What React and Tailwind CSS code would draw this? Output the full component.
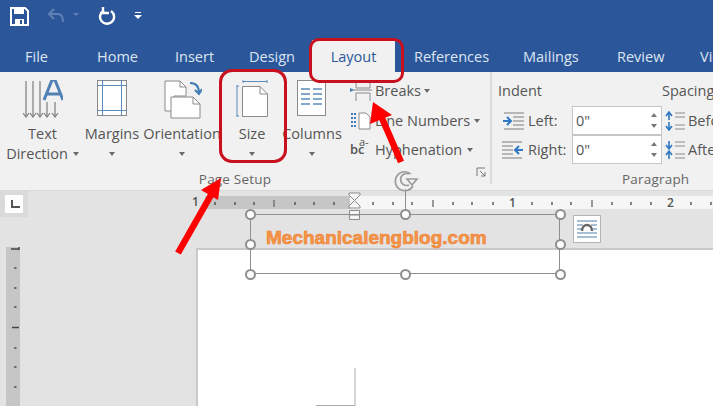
const tabs = [
  { label: "File", cls: "ml-[25px] w-[72px]" },
  { label: "Home", cls: "w-[78px]" },
  { label: "Insert", cls: "w-[74px]" },
  { label: "Design", cls: "w-[63px]" },
];
const tabsRight = [
  { label: "References", cls: "w-[109px]" },
  { label: "Mailings", cls: "w-[94px]" },
  { label: "Review", cls: "w-[83px]" },
  { label: "View", cls: "w-[40px]" },
];

const rulerTicks = [215, 235, 254, 295, 314, 334, 373, 393, 412, 453, 472, 493, 532, 552, 571, 612, 631, 651, 691, 711];
const rulerLong = [274, 433, 592];
const vTicks = [268, 288, 307, 348, 367, 387];
const handles = [
  [250, 214], [405, 214], [560, 214],
  [250, 244], [560, 244],
  [250, 274], [405, 274], [560, 274],
];

function Caret({ className = "" }) {
  return <span className={`inline-block h-0 w-0 border-x-[3.5px] border-t-[4px] border-x-transparent border-t-[#6a6a6a] ${className}`} />;
}

function BigButton({ width, icon, lines, caretInline }) {
  return (
    <div className={`flex shrink-0 flex-col items-center ${width}`}>
      <div className="flex h-[52px] items-start justify-center pt-[8px]">{icon}</div>
      <div className="h-[20px] whitespace-nowrap leading-[20px]">{lines[0]}</div>
      <div className="flex h-[20px] items-center justify-center whitespace-nowrap leading-[20px]">
        {lines[1]}
        {caretInline ? <Caret className="ml-[5px]" /> : <Caret />}
      </div>
    </div>
  );
}

function TextDirIcon() {
  return (
    <svg width="40" height="40" viewBox="-1 0 40 40" fill="none">
      <g stroke="#7d7d7d" strokeWidth="1.2">
        <path d="M2 1V37M9 1V37M16 1V37M23 22V37M31 22V37" />
        <path d="M-1 33L2 37L5 33M6 33L9 37L12 33M13 33L16 37L19 33M20 33L23 37L26 33M28 33L31 37L34 33" />
      </g>
      <path d="M20 20L28 0H31L39 20M23 14H36" stroke="#4f81b5" strokeWidth="3" />
    </svg>
  );
}
function MarginsIcon() {
  return (
    <svg width="30" height="37" viewBox="0 0 30 37" fill="none">
      <rect x="0.5" y="0.5" width="29" height="35" fill="#fff" stroke="#8a8a8a" />
      <path d="M0 5.5H30M0 30.5H30M5.5 0V36M24.5 0V36" stroke="#5b8bbb" />
    </svg>
  );
}
function OrientationIcon() {
  return (
    <svg width="38" height="39" viewBox="0 0 38 39" fill="none" stroke="#8a8a8a" className="ml-[2px]">
      <path d="M1 1H16L22 7V16H10V31H1Z" fill="#fff" />
      <path d="M16 1V7H22" />
      <path d="M7 17H29L36 24V38H7Z" fill="#fff" />
      <path d="M29 17V24H36" />
      <path d="M26 3C32 3 35 6 35 13M31 10L35 14L38 9" stroke="#3f7cb5" strokeWidth="2" />
    </svg>
  );
}
function SizeIcon() {
  return (
    <svg width="32" height="38" viewBox="0 0 32 38" fill="none">
      <path d="M7 1.5H31M7 0V3M31 0V3M1 6V36M0 6H3M0 36H3" stroke="#5b8bbb" />
      <path d="M6.5 6.5H24L31.5 14V36.5H6.5Z" fill="#fff" stroke="#8a8a8a" />
      <path d="M24 6.5V14H31.5" stroke="#8a8a8a" />
    </svg>
  );
}
function ColumnsIcon() {
  return (
    <svg width="30" height="37" viewBox="0 0 30 37" fill="none">
      <rect x="0.5" y="0.5" width="28" height="35" fill="#fff" stroke="#8a8a8a" />
      <path d="M4 9H13M16 9H25M4 14H13M16 14H25M4 19H13M16 19H25M4 24H13M16 24H25" stroke="#5b8bbb" strokeWidth="1.4" />
    </svg>
  );
}
function IndentIcon({ flip }) {
  return (
    <svg width="22" height="18" viewBox="0 0 22 18" fill="none" className={flip ? "-scale-x-100" : ""}>
      <path d="M2 1H22M11 5H22M11 9H22M11 13H22M2 17H22" stroke="#7d7d7d" />
      <path d="M1 9H8M5 5L9 9L5 13" stroke="#2f78c4" strokeWidth="2" />
    </svg>
  );
}
function SpacingIcon({ flip }) {
  return (
    <svg width="20" height="20" viewBox="0 0 20 20" fill="none">
      <path d="M10 2H20M10 6H20M10 14H20M10 18H20" stroke="#8a8a8a" />
      <path d={flip ? "M4 1V8M1 5L4 9L7 5M4 19V12M1 15L4 11L7 15" : "M4 9V2M1 5L4 1L7 5M4 11V18M1 15L4 19L7 15"} stroke="#2f78c4" strokeWidth="1.6" />
    </svg>
  );
}
function Spinner() {
  return (
    <div className="flex flex-col items-center gap-[7px] pr-[4px]">
      <span className="h-0 w-0 border-x-[3px] border-b-[4px] border-x-transparent border-b-[#777]" />
      <span className="h-0 w-0 border-x-[3px] border-t-[4px] border-x-transparent border-t-[#777]" />
    </div>
  );
}
function ValueInput() {
  return (
    <div className="flex h-[29px] w-[90px] shrink-0 items-center justify-between border border-[#c6c6c6] bg-white pl-[3px]">
      <span>0"</span>
      <Spinner />
    </div>
  );
}

export default function App() {
  return (
    <div className="relative h-[406px] w-[713px] overflow-hidden bg-[#e3e3e3] font-['Open_Sans',sans-serif] text-[14.5px] text-[#555]">
      {/* title bar + tabs */}
      <header className="flex h-[72px] flex-col bg-[#2b579a] text-[#dde5f1]">
        <div className="flex h-[40px] items-start pl-[10px] pt-[7px]">
          <svg width="19" height="19" viewBox="0 0 19 19" fill="none">
            <path d="M1 1H15L18 4V18H1Z" stroke="#fff" strokeWidth="2" fill="none" />
            <path d="M4 1H14V7H4ZM5 12H14V18H5Z" fill="#fff" />
            <path d="M10 13H12V17H10Z" fill="#2b579a" />
          </svg>
          <svg width="18" height="16" viewBox="0 0 18 16" fill="none" className="ml-[18px] mt-[1px]" stroke="#5f80b4" strokeWidth="2">
            <path d="M7 1L2 6L7 11M2 6H11C15 6 16 9 16 14" />
          </svg>
          <span className="ml-[8px] mt-[6px] h-0 w-0 border-x-[3px] border-t-[3px] border-x-transparent border-t-[#5f80b4]" />
          <svg width="18" height="18" viewBox="0 0 18 18" fill="none" className="ml-[19px]" stroke="#fff" strokeWidth="2.4">
            <path d="M6 3.5A7 7 0 1 0 13 4M5 0V6H11" />
          </svg>
          <div className="ml-[18px] mt-[5px] flex flex-col items-center gap-[2px]">
            <span className="h-[1px] w-[6px] bg-white" />
            <span className="h-0 w-0 border-x-[4px] border-t-[4px] border-x-transparent border-t-white" />
          </div>
        </div>
        <nav className="flex h-[32px] items-start">
          {tabs.map((t) => (
            <div key={t.label} className={`${t.cls} shrink-0 whitespace-nowrap pt-[7px] leading-[20px]`}>{t.label}</div>
          ))}
          <div className="mr-[19px] flex h-[32px] w-[83px] shrink-0 justify-center bg-[#f1f1f1] pt-[7px] leading-[20px] text-[#2b579a]">Layout</div>
          {tabsRight.map((t) => (
            <div key={t.label} className={`${t.cls} shrink-0 whitespace-nowrap pt-[7px] leading-[20px]`}>{t.label}</div>
          ))}
        </nav>
      </header>

      {/* ribbon */}
      <section className="flex h-[118px] bg-[#f1f1f1]">
        <div className="mb-[6px] flex w-[492px] shrink-0 flex-col border-r-2 border-[#dcdcdc]">
          <div className="flex h-[92px]">
            <BigButton width="w-[82px] pl-[3px]" icon={<TextDirIcon />} lines={["Text", "Direction"]} caretInline />
            <BigButton width="w-[60px]" icon={<MarginsIcon />} lines={["Margins", ""]} />
            <BigButton width="w-[80px]" icon={<OrientationIcon />} lines={["Orientation", ""]} />
            <BigButton width="w-[60px]" icon={<SizeIcon />} lines={["Size", ""]} />
            <BigButton width="w-[60px]" icon={<ColumnsIcon />} lines={["Columns", ""]} />
            <div className="ml-[8px] flex shrink-0 flex-col whitespace-nowrap pt-[5px]">
              <div className="flex h-[29px] items-center gap-[3px]">
                <svg width="22" height="24" viewBox="0 0 22 24" fill="none" stroke="#8a8a8a">
                  <path d="M6 2V9H20V2M6 14H20V22M6 14V22M2 11H22" />
                  <path d="M0 9L4 11L0 13Z" fill="#3f7cb5" stroke="none" />
                </svg>
                <span>Breaks</span>
                <Caret />
              </div>
              <div className="flex h-[30px] items-center gap-[4px]">
                <svg width="21" height="18" viewBox="0 0 21 18" fill="none">
                  <path d="M9 1H16L20 5V17H9Z" fill="#fff" stroke="#8a8a8a" />
                  <path d="M1 2H6M1 6H6M1 10H6M1 14H6" stroke="#3f7cb5" strokeWidth="2" strokeDasharray="2 1" />
                </svg>
                <span>Line Numbers</span>
                <Caret />
              </div>
              <div className="flex h-[29px] items-center gap-[5px]">
                <span className="relative w-[20px] text-[13px] font-semibold leading-none">bc<span className="absolute left-[9px] top-[-7px] text-[11px] font-normal">a-</span></span>
                <span>Hyphenation</span>
                <Caret />
              </div>
            </div>
          </div>
          <div className="relative flex h-[20px] items-center justify-center pr-[20px] pt-[10px]">
            <span className="text-[13.5px] tracking-[0.2px] text-[#666]">Page Setup</span>
            <svg width="10" height="10" viewBox="0 0 10 10" fill="none" className="absolute right-[4px] top-[3px]" stroke="#777">
              <path d="M1 9V1H9M4 4L9 9M9 5V9H5" />
            </svg>
          </div>
        </div>

        <div className="flex shrink-0 flex-col whitespace-nowrap pl-[6px] pt-[8px]">
          <div className="flex h-[26px] gap-[120px]">
            <span>Indent</span>
            <span>Spacing</span>
          </div>
          <div className="flex h-[29px] items-center">
            <span className="ml-[4px] mr-[4px]"><IndentIcon /></span>
            <span className="w-[44px]">Left:</span>
            <ValueInput />
            <span className="ml-[3px] mr-[3px]"><SpacingIcon /></span>
            <span>Before</span>
          </div>
          <div className="flex h-[29px] items-center">
            <span className="ml-[4px] mr-[4px]"><IndentIcon flip /></span>
            <span className="w-[44px]">Right:</span>
            <ValueInput />
            <span className="ml-[3px] mr-[3px]"><SpacingIcon flip /></span>
            <span>After</span>
          </div>
          <div className="mt-[5px] pl-[124px] text-[13.5px] tracking-[0.2px] text-[#666]">Paragraph</div>
        </div>
      </section>

      {/* document area */}
      <main className="flex h-[216px] flex-col">
        <div className="h-[6px] border-t border-[#d8d8d8]" />
        <div className="relative ml-[205px] flex h-[13px]">
          <div className="w-[145px] bg-[#c6c6c6]" />
          <div className="flex-1 bg-[#f6f6f6]" />
        </div>
        <div className="ml-[196px] mt-[39px] flex-1 border-l-2 border-t-2 border-[#c9c9c9] bg-white" />
      </main>

      {/* ruler corner */}
      <div className="absolute left-0 top-[190px] flex h-[27px] w-[28px] items-center justify-center bg-[#dadada]">
        <div className="flex h-[18px] w-[18px] items-center justify-center bg-white">
          <span className="h-[8px] w-[9px] translate-x-[1px] border-b-2 border-l-2 border-[#555]" />
        </div>
      </div>

      {/* rulers */}
      <svg width="713" height="406" viewBox="0 0 713 406" fill="none" className="absolute left-0 top-0">
        <rect x="6" y="247" width="14" height="159" fill="#c6c6c6" />
        <g stroke="#444" strokeWidth="1.3">
          {rulerTicks.map((x) => <path key={x} d={`M${x} 202V205`} />)}
          {rulerLong.map((x) => <path key={x} d={`M${x} 200V207`} stroke="#666" />)}
          {vTicks.map((y) => <path key={y} d={`M14 ${y}H16.5`} />)}
          <path d="M11 249H19M19 247V250M12 327.5H19" />
        </g>
        <path d="M355 368V406M316 405.5H355" stroke="#aaa" />
      </svg>
      <span className="absolute left-[192px] top-[194px] text-[12px] font-semibold leading-[16px] text-[#555]">1</span>
      <span className="absolute left-[509px] top-[195px] text-[12px] font-semibold leading-[16px] text-[#555]">1</span>
      <span className="absolute left-[667px] top-[195px] text-[12px] font-semibold leading-[16px] text-[#555]">2</span>

      {/* indent marker */}
      <svg width="14" height="30" viewBox="0 0 14 30" fill="none" className="absolute left-[348px] top-[192px]" stroke="#8a8a8a">
        <path d="M1 1H12V3L6.5 8.5L12 14V16H1V14L6.5 8.5L1 3Z" fill="#f6f6f6" />
        <path d="M1.5 18.5H11.5V27.5H1.5ZM1.5 23H11.5" fill="#f6f6f6" />
      </svg>

      {/* selected text box */}
      <div className="absolute left-[250px] top-[214px] h-[60px] w-[310px] border border-[#8f8f8f]">
        <span className="absolute left-[15px] top-[11px] whitespace-nowrap font-['Liberation_Sans',sans-serif] text-[19px] font-bold leading-[24px] text-[#f79646] [-webkit-text-stroke:0.6px_#ed7d31]">
          Mechanicalengblog.com
        </span>
      </div>
      <div className="absolute left-[405px] top-[189px] h-[25px] w-[1px] bg-[#8f8f8f]" />
      {handles.map(([x, y]) => (
        <div key={`${x}-${y}`} style={{ left: x - 5.5, top: y - 5.5 }} className="absolute h-[11px] w-[11px] rounded-full border-2 border-[#8f8f8f] bg-white" />
      ))}
      <svg width="26" height="24" viewBox="0 0 26 24" fill="none" className="absolute left-[393px] top-[169px]" stroke="#9a9a9a" strokeWidth="1.6">
        <path d="M18 5A9.5 9.5 0 1 0 20 17" />
        <path d="M16 5A6 6 0 1 0 16 16" />
        <path d="M14 10H24L19 16Z" fill="#f1f1f1" />
      </svg>

      {/* layout options */}
      <div className="absolute left-[573px] top-[215px] flex h-[28px] w-[28px] items-center justify-center border border-[#b5b5b5] bg-white">
        <svg width="22" height="22" viewBox="0 0 22 22" fill="none">
          <path d="M1 3H21M1 7H7M15 7H21M1 11H5M17 11H21M1 15H21M1 19H21" stroke="#4f7fa8" />
          <path d="M6 13C6 5 16 5 16 13" stroke="#666" strokeWidth="2.4" />
        </svg>
      </div>

      {/* red annotations */}
      <div className="absolute left-[219px] top-[69px] h-[94px] w-[68px] rounded-[13px] border-[3px] border-[#c8101e]" />
      <div className="absolute left-[309px] top-[38px] h-[45px] w-[95px] rounded-[10px] border-[3px] border-[#c8101e]" />
      <svg width="713" height="406" viewBox="0 0 713 406" fill="none" className="absolute left-0 top-0">
        <path d="M178 253L211 195" stroke="#f00" strokeWidth="6.5" />
        <path d="M221 178L201 190L218 200Z" fill="#f00" />
        <path d="M401 162L381 116" stroke="#f00" strokeWidth="6.5" />
        <path d="M373 102L370 124L392 115Z" fill="#f00" />
      </svg>
    </div>
  );
}
